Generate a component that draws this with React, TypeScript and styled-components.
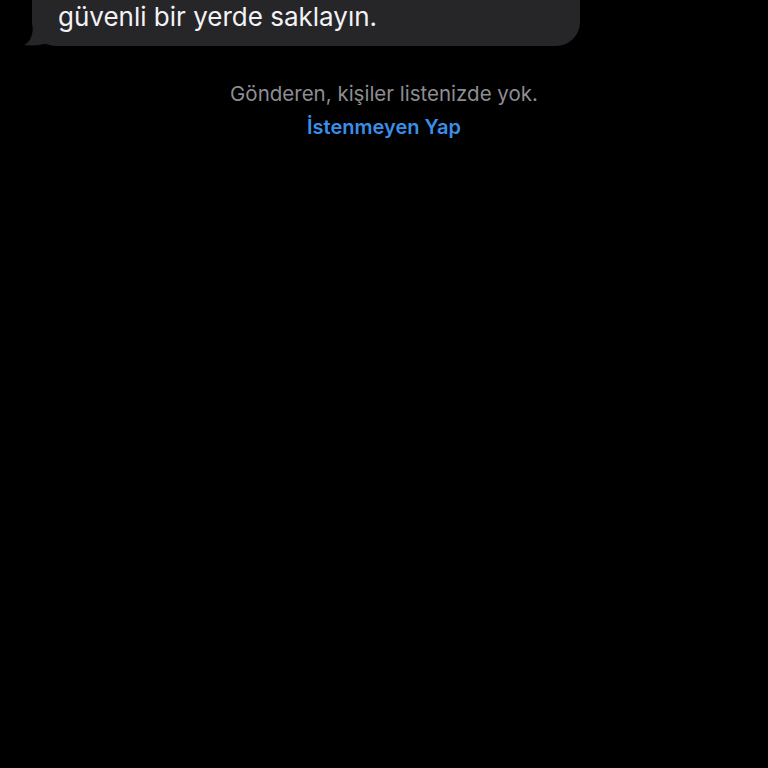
import styled, { createGlobalStyle } from 'styled-components'

const GlobalStyle = createGlobalStyle`
  html, body {
    margin: 0;
    padding: 0;
    background: #000;
  }
  body {
    font-family: Inter, "Noto Sans", "Liberation Sans", sans-serif;
    -webkit-font-smoothing: antialiased;
  }
`

const Screen = styled.div`
  width: 768px;
  height: 768px;
  overflow: hidden;
  background: #000;
`

const Thread = styled.div`
  display: flex;
  flex-direction: column;
  margin-top: -40px;
`

const IncomingRow = styled.div`
  display: flex;
  padding-left: 32px;
`

const Bubble = styled.div`
  position: relative;
  width: 548px;
  box-sizing: border-box;
  padding: 41px 20px 13px 26px;
  background: #262628;
  border-radius: 24px;
  color: #f2f2f7;
  font-size: 26px;
  line-height: 32px;
`

const Tail = styled.svg`
  position: absolute;
  left: -8px;
  bottom: 0;
  width: 26px;
  height: 22px;
`

const Notice = styled.div`
  display: flex;
  flex-direction: column;
  align-items: center;
  margin-top: 36px;
  gap: 9px;
`

const NoticeText = styled.div`
  color: #8d8d93;
  font-size: 20.5px;
  line-height: 24px;
`

const NoticeAction = styled.div`
  color: #3b8ee8;
  font-size: 20px;
  font-weight: 600;
  line-height: 24px;
`

export default function App() {
  return (
    <Screen>
      <GlobalStyle />
      <Thread>
        <IncomingRow>
          <Bubble>
            güvenli bir yerde saklayın.
            <Tail viewBox="0 0 26 22">
              <path d="M26 0 L26 18 C20 21 10 22 0 21 C6 18 9 12 9 0 Z" fill="#262628" />
            </Tail>
          </Bubble>
        </IncomingRow>
        <Notice>
          <NoticeText>Gönderen, kişiler listenizde yok.</NoticeText>
          <NoticeAction>İstenmeyen Yap</NoticeAction>
        </Notice>
      </Thread>
    </Screen>
  )
}
